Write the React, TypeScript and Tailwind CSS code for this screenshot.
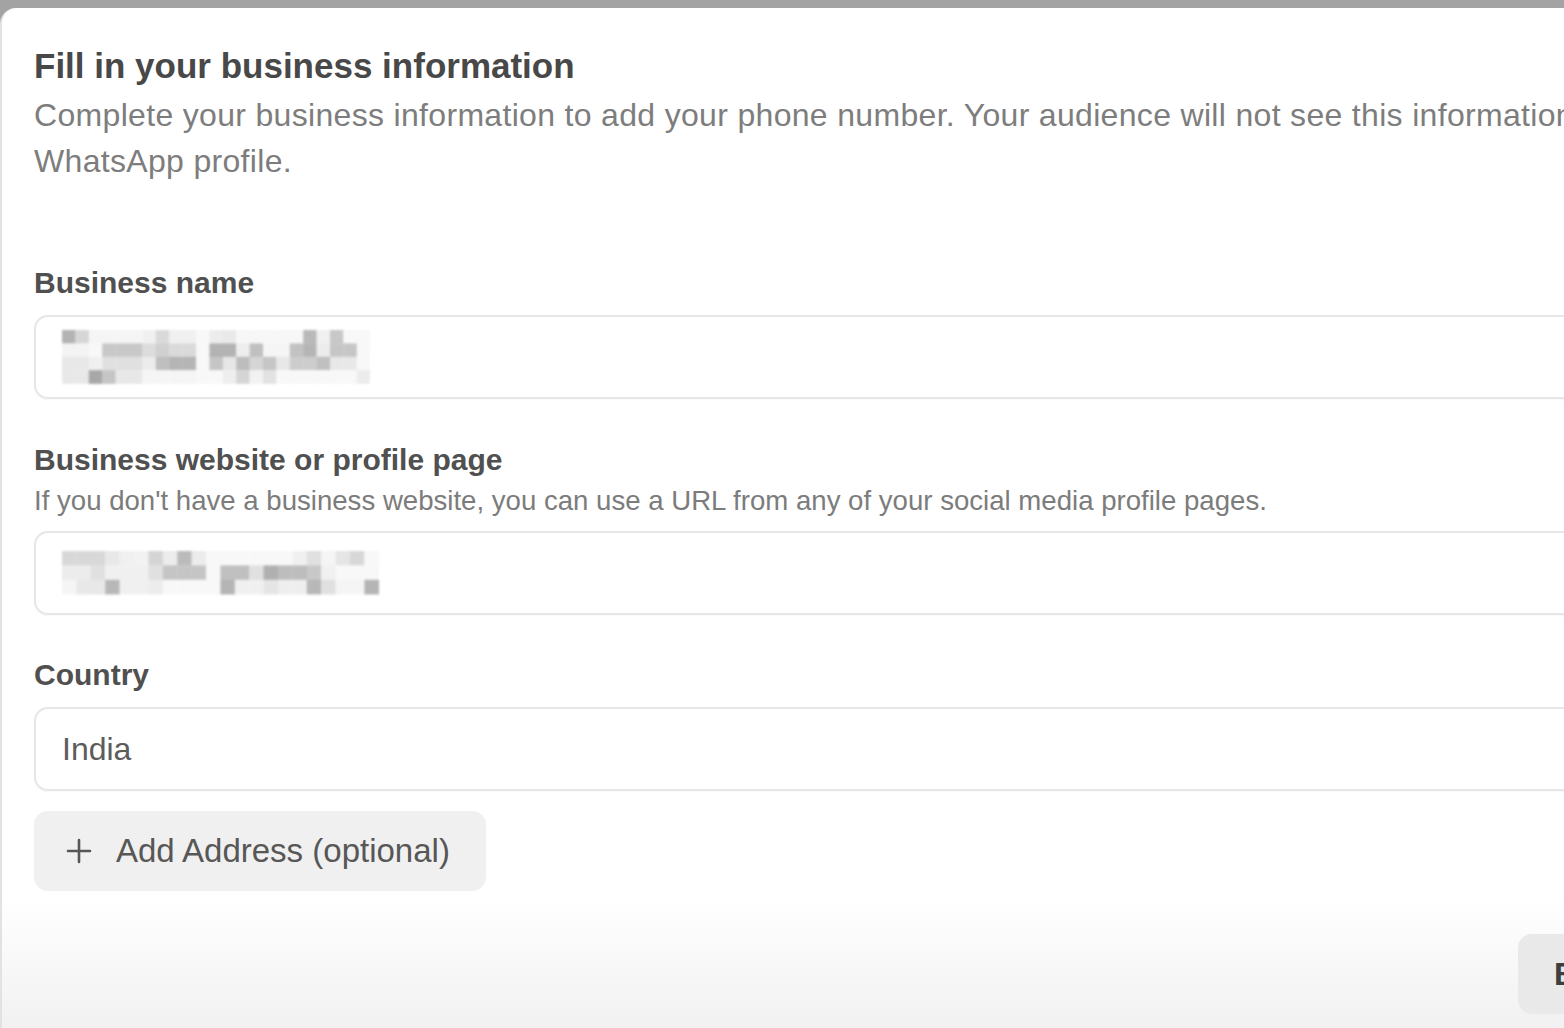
import React from 'react';

// pixelated (redacted) values in the reference, as grey levels per cell
const nameMosaic = [
  ['b3', 'd6', 'f5', 'f5', 'f5', 'f5', 'f0', 'd9', 'f0', 'f0', 'f8', 'ec', 'e9', 'f7', 'f7', 'f7', 'f7', 'f7', 'b9', 'f0', 'c8', 'f8', 'f8'],
  ['f3', 'f3', 'f8', 'c8', 'c8', 'c8', 'dc', 'd0', 'da', 'da', 'f8', 'b3', 'b3', 'ee', 'c0', 'f5', 'f5', 'c2', 'b5', 'ec', 'c6', 'c6', 'f8'],
  ['e8', 'e8', 'f0', 'e0', 'e0', 'e0', 'ec', 'bf', 'b5', 'b5', 'f8', 'c5', 'e6', 'bd', 'd5', 'c6', 'e8', 'cd', 'cd', 'c0', 'e8', 'e8', 'f8'],
  ['e8', 'e8', 'a8', 'c5', 'e8', 'e8', 'f5', 'f5', 'f5', 'f5', 'f8', 'f8', 'ee', 'd5', 'f2', 'e2', 'f8', 'f8', 'f8', 'f8', 'f8', 'f8', 'ec'],
];

const siteMosaic = [
  ['d8', 'd8', 'd8', 'e8', 'f0', 'f2', 'd5', 'ec', 'bb', 'ec', 'f8', 'f8', 'f8', 'f8', 'f8', 'f8', 'f0', 'e0', 'f5', 'e5', 'd8', 'f8'],
  ['ec', 'ec', 'e0', 'f0', 'f0', 'f0', 'e0', 'c5', 'c5', 'c5', 'f8', 'c0', 'c0', 'e0', 'b0', 'bd', 'bd', 'c8', 'f0', 'f8', 'f8', 'f8'],
  ['f5', 'e8', 'e8', 'b8', 'f0', 'f0', 'ec', 'f8', 'f8', 'f8', 'f8', 'b5', 'f0', 'f0', 'e5', 'ee', 'ee', 'b8', 'e0', 'f5', 'f5', 'b5'],
];

interface MosaicProps {
  cells: string[][];
  cell: number;
}

const Mosaic: React.FC<MosaicProps> = ({ cells, cell }) => {
  const cols = cells[0].length;
  const rows = cells.length;
  return (
    <svg
      width={cols * cell}
      height={rows * cell}
      viewBox={`0 0 ${cols} ${rows}`}
      preserveAspectRatio="none"
      className="block blur-[0.8px]"
    >
      {cells.map((row, y) =>
        row.map((g, x) => <rect key={`${x}-${y}`} x={x} y={y} width={1.02} height={1.02} fill={`#${g}${g}${g}`} />)
      )}
    </svg>
  );
};

const Field: React.FC<{ children: React.ReactNode }> = ({ children }) => (
  <div className="h-[84px] rounded-[14px] border-2 border-[#e7e7e7] bg-white shadow-[0_1px_2px_rgba(0,0,0,0.04)] flex items-center pl-[26px]">
    {children}
  </div>
);

const App: React.FC = () => {
  return (
    <div className="w-full h-[1028px] overflow-hidden bg-[#a3a3a3] pt-[8px] font-['Liberation_Sans',Arial,sans-serif]">
      <div className="w-[1794px] h-[1040px] bg-white rounded-tl-[16px] border-l-2 border-[#e2e2e2] flex flex-col">
        <div className="px-[32px] pt-[38px]">
          <h1 className="text-[35px] leading-[40px] font-bold text-[#484848]">Fill in your business information</h1>
          <p className="mt-[6px] text-[32px] leading-[46px] tracking-[0.01em] text-[#7d7d7d]">
            Complete your business information to add your phone number. Your audience will not see this information on your WhatsApp profile.
          </p>

          <div className="mt-[81px] text-[30px] leading-[36px] font-bold text-[#505050]">Business name</div>
          <div className="mt-[14px]">
            <Field>
              <Mosaic cells={nameMosaic} cell={13.4} />
            </Field>
          </div>

          <div className="mt-[43px] text-[30px] leading-[36px] font-bold text-[#505050]">Business website or profile page</div>
          <div className="mt-[7px] text-[27.6px] leading-[32px] text-[#7c7c7c]">
            If you don't have a business website, you can use a URL from any of your social media profile pages.
          </div>
          <div className="mt-[14px]">
            <Field>
              <Mosaic cells={siteMosaic} cell={14.4} />
            </Field>
          </div>

          <div className="mt-[42px] text-[30px] leading-[36px] font-bold text-[#505050]">Country</div>
          <div className="mt-[14px]">
            <Field>
              <span className="text-[32px] text-[#5c5c5c]">India</span>
            </Field>
          </div>

          <button className="mt-[20px] h-[80px] pl-[32px] pr-[36px] rounded-[14px] bg-[#f0f0f0] flex items-center gap-[24px] text-[33px] text-[#575757]">
            <svg width="26" height="26" viewBox="0 0 26 26" fill="none" stroke="#575757" strokeWidth="2.6" strokeLinecap="round">
              <path d="M13 2v22M2 13h22" />
            </svg>
            <span>Add Address (optional)</span>
          </button>
        </div>

        <div className="flex-1 mt-[8px] bg-gradient-to-b from-white to-[#efefef] px-[34px] pt-[35px] flex justify-end gap-[12px]">
          <button className="h-[80px] w-[110px] rounded-[14px] bg-[#e9e9e9] text-[32px] font-bold text-[#3e3e3e] pl-[36px] text-left">
            Back
          </button>
          <button className="h-[80px] w-[120px] rounded-[14px] bg-[#1877f2] text-[32px] font-bold text-white">Next</button>
        </div>
      </div>
    </div>
  );
};

export default App;
